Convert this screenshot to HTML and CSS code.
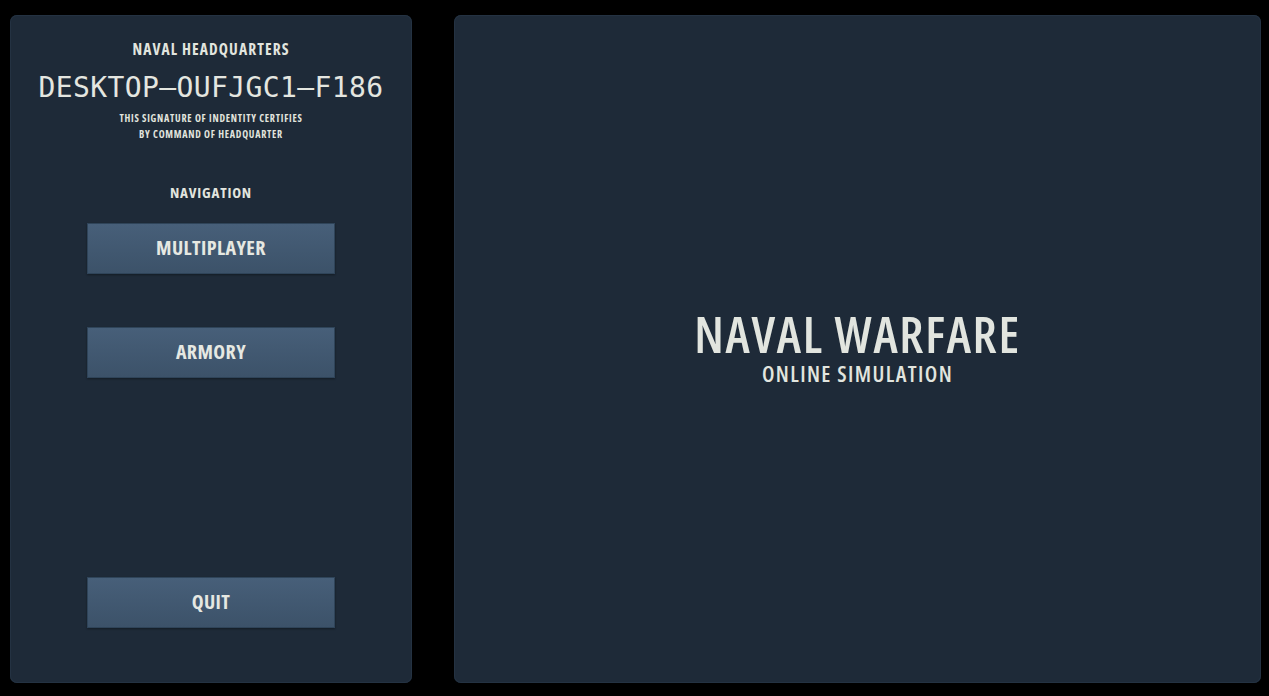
FILE: index.html
```html
<!DOCTYPE html>
<html>
<head>
<meta charset="utf-8">
<link rel="stylesheet" href="styles.css">
</head>
<body>
<div class="screen">
  <aside class="side">
    <div class="hq">NAVAL HEADQUARTERS</div>
    <div class="ident">DESKTOP–OUFJGC1–F186</div>
    <div class="cert">THIS SIGNATURE OF INDENTITY CERTIFIES<br>BY COMMAND OF HEADQUARTER</div>
    <div class="navlabel">NAVIGATION</div>
    <button class="btn btn-first">MULTIPLAYER</button>
    <button class="btn btn-second">ARMORY</button>
    <button class="btn btn-quit">QUIT</button>
  </aside>
  <main class="main">
    <div class="title">NAVAL WARFARE</div>
    <div class="subtitle">ONLINE SIMULATION</div>
  </main>
</div>
</body>
</html>
```
FILE: styles.css
```css
html, body {
  margin: 0;
  padding: 0;
  background: #000;
  width: 1269px;
  height: 696px;
  overflow: hidden;
}
.screen {
  display: flex;
  gap: 42px;
  padding: 15px 8px 13px 10px;
  height: 696px;
  box-sizing: border-box;
}
.side, .main {
  background: #1e2a38;
  border-radius: 7px;
  box-shadow: inset 0 0 0 1px #243242;
  color: #e2e5df;
  font-family: "Open Sans", sans-serif;
  font-stretch: condensed;
  font-weight: 700;
}
.side {
  width: 402px;
  flex: none;
  display: flex;
  flex-direction: column;
  align-items: center;
  padding: 0 0 55px;
  box-sizing: border-box;
}
.hq {
  margin-top: 25px;
  font-size: 15.5px;
  line-height: 18px;
  letter-spacing: 1.1px;
}
.ident {
  margin-top: 14px;
  font-family: "DejaVu Sans Mono", monospace;
  font-stretch: normal;
  font-weight: normal;
  font-size: 28px;
  line-height: 32px;
  letter-spacing: 0.4px;
  color: #e4e6e0;
}
.cert {
  margin-top: 6px;
  font-size: 10px;
  line-height: 16px;
  text-align: center;
  letter-spacing: 0.75px;
}
.navlabel {
  margin-top: 41px;
  font-size: 15px;
  line-height: 18px;
  letter-spacing: 0.8px;
}
.btn {
  width: 248px;
  height: 51px;
  border: 1px solid #2f4459;
  background: linear-gradient(#475f79, #3c5269);
  color: #e6e8e2;
  font-family: "Open Sans", sans-serif;
  font-stretch: condensed;
  font-weight: 700;
  font-size: 20px;
  letter-spacing: 0.4px;
  padding: 0 0 2px;
  box-shadow: 0 1px 2px rgba(0,0,0,0.35);
}
.btn-first { margin-top: 22px; }
.btn-second { margin-top: 53px; }
.btn-quit { margin-top: auto; }
.main {
  flex: 1;
  display: flex;
  flex-direction: column;
  align-items: center;
  justify-content: center;
  padding-bottom: 8px;
}
.title {
  font-size: 50px;
  line-height: 54px;
  letter-spacing: 1.7px;
  font-weight: 650;
  color: #e2e5df;
}
.subtitle {
  margin-top: 1px;
  font-size: 22px;
  line-height: 22px;
  letter-spacing: 1.4px;
  font-weight: 650;
}
```
